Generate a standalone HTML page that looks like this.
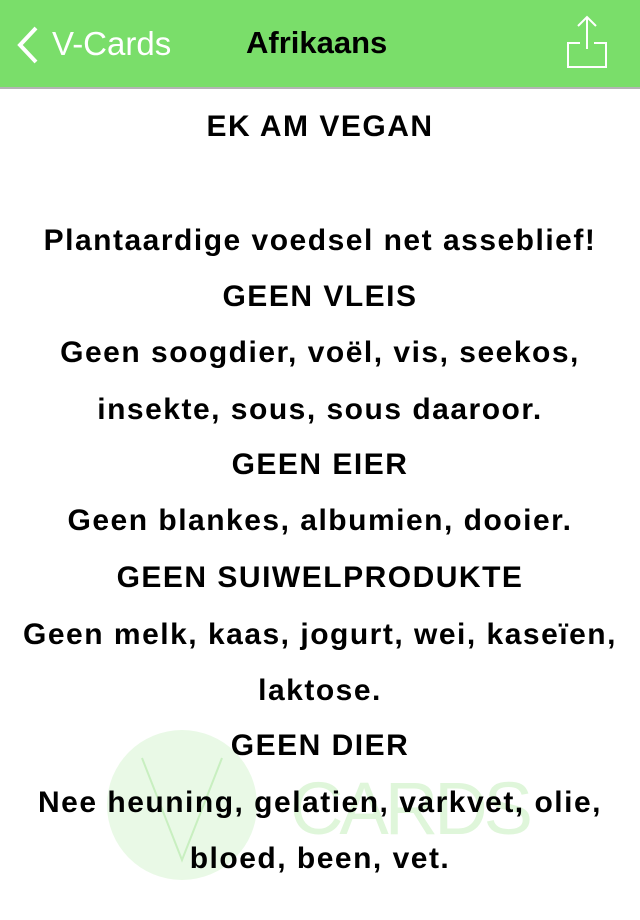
<html><head><style>
body{margin:0;width:640px;height:920px;background:#fff;overflow:hidden;position:relative;font-family:"Liberation Sans",sans-serif}
.hdr{position:absolute;top:0;left:0;width:640px;height:87px;background:#7ade6a;border-bottom:2px solid #b4b4b4}
.t{position:absolute;left:0;width:640px;text-align:center;font-weight:bold;font-size:30px;letter-spacing:1.5px;color:#000;line-height:56px;z-index:2;white-space:nowrap}
</style></head><body>
<div class="hdr">
<svg style="position:absolute;left:14px;top:25px" width="28" height="40"><path d="M22 3 L6 20 L22 37" stroke="#fff" stroke-width="4" fill="none"/></svg>
<div style="position:absolute;left:52px;top:25px;font-size:33px;color:#fff">V-Cards</div>
<div style="position:absolute;left:246px;top:25px;font-size:31px;font-weight:bold;color:#000">Afrikaans</div>
<svg style="position:absolute;left:565px;top:14px" width="44" height="56"><path d="M15 29 H3 V53 H41 V29 H29" stroke="#fff" stroke-width="2" fill="none"/><path d="M22 3 V35 M13 12 L22 3 L31 12" stroke="#fff" stroke-width="2" fill="none"/></svg>
</div>
<svg style="position:absolute;left:0;top:0;z-index:1" width="640" height="920">
<circle cx="182" cy="805" r="75" fill="#e9f9e6"/>
<path d="M142 758 L182 860 L222 758" stroke="#c8efc0" stroke-width="2" fill="none"/>
<text x="290" y="834" font-family="Liberation Sans" font-size="74" fill="#dff6da" textLength="243">CARDS</text>
</svg>
<div class="t" style="top:99px">EK AM VEGAN</div>
<div class="t" style="top:213px">Plantaardige voedsel net asseblief!</div>
<div class="t" style="top:269px">GEEN VLEIS</div>
<div class="t" style="top:325px">Geen soogdier, voël, vis, seekos,</div>
<div class="t" style="top:382px">insekte, sous, sous daaroor.</div>
<div class="t" style="top:437px">GEEN EIER</div>
<div class="t" style="top:493px">Geen blankes, albumien, dooier.</div>
<div class="t" style="top:550px">GEEN SUIWELPRODUKTE</div>
<div class="t" style="top:607px">Geen melk, kaas, jogurt, wei, kaseïen,</div>
<div class="t" style="top:663px">laktose.</div>
<div class="t" style="top:718px">GEEN DIER</div>
<div class="t" style="top:775px">Nee heuning, gelatien, varkvet, olie,</div>
<div class="t" style="top:831px">bloed, been, vet.</div>
</body></html>
